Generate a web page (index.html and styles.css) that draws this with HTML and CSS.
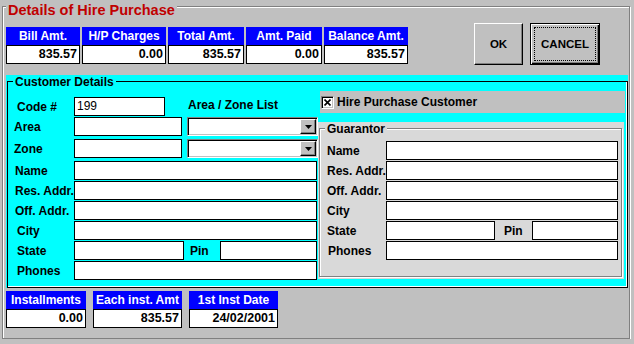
FILE: index.html
```html
<!DOCTYPE html>
<html lang="en">

<head>
    <meta charset="UTF-8">
    <title>Details of Hire Purchase</title>
    <link rel="stylesheet" href="styles.css">
</head>

<body>
    <div class="window">
        <span class="window-title">Details of Hire Purchase</span>

        <div class="top">
            <div class="amounts">
                <div class="amt w74"><div class="amt-head">Bill Amt.</div><div class="amt-val">835.57</div></div>
                <div class="amt w84"><div class="amt-head">H/P Charges</div><div class="amt-val">0.00</div></div>
                <div class="amt w76"><div class="amt-head">Total Amt.</div><div class="amt-val">835.57</div></div>
                <div class="amt w76"><div class="amt-head">Amt. Paid</div><div class="amt-val">0.00</div></div>
                <div class="amt w84"><div class="amt-head">Balance Amt.</div><div class="amt-val">835.57</div></div>
            </div>
            <button class="btn btn-ok">OK</button>
            <button class="btn btn-cancel"><span class="focus">CANCEL</span></button>
        </div>

        <div class="customer">
            <div class="cust-frame">
                <span class="group-title">Customer Details</span>

                <div class="cust-left">
                    <div class="row first">
                        <span class="lbl code">Code #</span>
                        <div class="field w91">199</div>
                        <span class="zone-list">Area / Zone List</span>
                    </div>
                    <div class="row">
                        <span class="lbl tight">Area</span>
                        <div class="field w108"></div>
                        <div class="combo"><span class="drop"><svg width="7" height="4" viewBox="0 0 7 4"><path d="M0 0h7L3.5 4z" fill="#000"/></svg></span></div>
                    </div>
                    <div class="row wide">
                        <span class="lbl tight">Zone</span>
                        <div class="field w108"></div>
                        <div class="combo"><span class="drop"><svg width="7" height="4" viewBox="0 0 7 4"><path d="M0 0h7L3.5 4z" fill="#000"/></svg></span></div>
                    </div>
                    <div class="row wide">
                        <span class="lbl">Name</span>
                        <div class="field w243"></div>
                    </div>
                    <div class="row">
                        <span class="lbl">Res. Addr.</span>
                        <div class="field w243"></div>
                    </div>
                    <div class="row">
                        <span class="lbl">Off. Addr.</span>
                        <div class="field w243"></div>
                    </div>
                    <div class="row">
                        <span class="lbl code">City</span>
                        <div class="field w243"></div>
                    </div>
                    <div class="row">
                        <span class="lbl code">State</span>
                        <div class="field w110"></div>
                        <span class="pin-lbl">Pin</span>
                        <div class="field w97"></div>
                    </div>
                    <div class="row">
                        <span class="lbl code">Phones</span>
                        <div class="field w243"></div>
                    </div>
                </div>

                <div class="cust-right">
                    <div class="hp-check">
                        <span class="check"><svg width="7" height="7" viewBox="0 0 7 7"><path d="M0.5 0.5l6 6M6.5 0.5l-6 6" stroke="#000" stroke-width="1.6"/></svg></span>
                        Hire Purchase Customer
                    </div>

                    <div class="guarantor">
                        <div class="g-frame">
                            <span class="g-title">Guarantor</span>
                            <div class="row first">
                                <span class="g-lbl">Name</span>
                                <div class="field w232"></div>
                            </div>
                            <div class="row">
                                <span class="g-lbl">Res. Addr.</span>
                                <div class="field w232"></div>
                            </div>
                            <div class="row">
                                <span class="g-lbl">Off. Addr.</span>
                                <div class="field w232"></div>
                            </div>
                            <div class="row">
                                <span class="g-lbl">City</span>
                                <div class="field w232"></div>
                            </div>
                            <div class="row">
                                <span class="g-lbl">State</span>
                                <div class="field w109"></div>
                                <span class="g-pin">Pin</span>
                                <div class="field w86"></div>
                            </div>
                            <div class="row">
                                <span class="g-lbl phones">Phones</span>
                                <div class="field w232"></div>
                            </div>
                        </div>
                    </div>
                </div>
            </div>
        </div>

        <div class="amounts bottom">
            <div class="amt w80"><div class="amt-head">Installments</div><div class="amt-val">0.00</div></div>
            <div class="amt w89"><div class="amt-head">Each inst. Amt</div><div class="amt-val">835.57</div></div>
            <div class="amt w89"><div class="amt-head">1st Inst Date</div><div class="amt-val">24/02/2001</div></div>
        </div>
    </div>
</body>

</html>
```

FILE: styles.css
```css
body {
    margin: 0;
    background-color: #c0c0c0;
    font-family: "Liberation Sans", Arial, sans-serif;
    font-size: 12px;
    font-weight: bold;
    color: #000;
}

/* outer group box */
.window {
    position: relative;
    box-sizing: border-box;
    width: 628px;
    height: 333px;
    margin: 6px 0 0 2px;
    padding: 16px 0 0 3px;
    border: 1px solid #808080;
    box-shadow: inset 1px 1px #fff, 1px 1px #fff;
}

.window-title {
    position: absolute;
    top: -5px;
    left: 3px;
    padding: 0 2px;
    background-color: #c0c0c0;
    color: #c00000;
    font-size: 14.5px;
    line-height: 17px;
}

.top {
    display: flex;
    height: 42px;
}

/* blue caption + white value boxes */
.amounts {
    display: flex;
    gap: 2px;
    margin-top: 4px;
}

.amounts.bottom {
    gap: 7px;
    margin-top: 3px;
}

.amt-head {
    height: 18px;
    line-height: 18px;
    background-color: #0000ff;
    color: #fff;
    text-align: center;
    white-space: nowrap;
}

.amt-val {
    box-sizing: border-box;
    height: 19px;
    line-height: 17px;
    padding-right: 2px;
    background-color: #fff;
    border: 1px solid #000;
    text-align: right;
    font-size: 12.5px;
}

.w74 { width: 74px; }
.w76 { width: 76px; }
.w80 { width: 80px; }
.w84 { width: 84px; }
.w86 { width: 86px; }
.w89 { width: 89px; }
.w91 { width: 91px; }
.w97 { width: 97px; }
.w108 { width: 108px; }
.w109 { width: 109px; }
.w110 { width: 110px; }
.w232 { width: 232px; }
.w243 { width: 243px; }

.btn {
    box-sizing: border-box;
    height: 42px;
    padding: 0;
    background-color: #c0c0c0;
    border: 1px solid;
    border-color: #fff #000 #000 #fff;
    box-shadow: inset -1px -1px #808080;
    font-family: "Liberation Sans", Arial, sans-serif;
    font-size: 11.5px;
    font-weight: bold;
    color: #000;
}

.btn-ok {
    width: 49px;
    margin-left: 66px;
}

.btn-cancel {
    width: 70px;
    margin-left: 7px;
    padding: 3px;
    border-color: #000;
    box-shadow: inset 1px 1px #fff, inset -1px -1px #000, inset -2px -2px #808080;
}

.focus {
    display: flex;
    align-items: center;
    justify-content: center;
    height: 100%;
    box-sizing: border-box;
    border: 1px dotted #000;
}

/* cyan customer panel */
.customer {
    box-sizing: border-box;
    width: 622px;
    height: 213px;
    margin-top: 10px;
    padding: 6px 0 0 1px;
    background-color: #00ffff;
}

.cust-frame {
    position: relative;
    display: flex;
    box-sizing: border-box;
    width: 621px;
    height: 207px;
    border: 1px solid #000;
    box-shadow: inset -1px -1px #fff;
}

.group-title {
    position: absolute;
    top: -7px;
    left: 5px;
    padding: 0 2px;
    background-color: #00ffff;
    line-height: 14px;
}

.cust-left {
    width: 310px;
    padding-top: 15px;
}

.row {
    display: flex;
    align-items: center;
    height: 19px;
    margin-top: 1px;
}

.row.first {
    margin-top: 0;
}

.row.wide {
    margin-top: 3px;
}

.lbl {
    box-sizing: border-box;
    width: 66px;
    padding-left: 7px;
}

.lbl.code {
    padding-left: 9px;
}

.lbl.tight {
    padding-left: 6px;
}

.field {
    box-sizing: border-box;
    height: 19px;
    padding-left: 2px;
    line-height: 17px;
    background-color: #fff;
    border: 1px solid #000;
    font-weight: normal;
}

.zone-list {
    margin-left: 23px;
    margin-top: -3px;
}

.combo {
    display: flex;
    justify-content: flex-end;
    box-sizing: border-box;
    width: 131px;
    height: 19px;
    margin-left: 5px;
    padding: 1px;
    background-color: #fff;
    border: 1px solid;
    border-color: #808080 #fff #fff #808080;
    box-shadow: inset 1px 1px #000, inset -1px -1px #c0c0c0;
}

.drop {
    display: flex;
    align-items: center;
    justify-content: center;
    box-sizing: border-box;
    width: 16px;
    height: 100%;
    background-color: #c0c0c0;
    border: 1px solid;
    border-color: #fff #000 #000 #fff;
    box-shadow: inset -1px -1px #808080;
}

.pin-lbl {
    box-sizing: border-box;
    width: 36px;
    padding-left: 6px;
}

.cust-right {
    width: 306px;
}

.hp-check {
    display: flex;
    align-items: center;
    width: 305px;
    height: 22px;
    margin: 9px 0 0 2px;
    padding-left: 1px;
    box-sizing: border-box;
    background-color: #c0c0c0;
}

.check {
    display: flex;
    align-items: center;
    justify-content: center;
    box-sizing: border-box;
    width: 13px;
    height: 13px;
    margin-right: 3px;
    background-color: #fff;
    border: 1px solid;
    border-color: #808080 #fff #fff #808080;
    box-shadow: inset 1px 1px #000, inset -1px -1px #c0c0c0;
}

/* guarantor group */
.guarantor {
    box-sizing: border-box;
    width: 306px;
    height: 157px;
    margin-top: 9px;
    padding: 6px 2px 2px 1px;
    background-color: #d9d9d9;
}

.g-frame {
    position: relative;
    box-sizing: border-box;
    height: 100%;
    padding: 12px 0 0 7px;
    border: 1px solid #808080;
    box-shadow: inset 1px 1px #fff, 1px 1px #fff;
}

.g-title {
    position: absolute;
    top: -7px;
    left: 5px;
    padding: 0 2px;
    background-color: #d9d9d9;
    line-height: 14px;
}

.g-lbl {
    width: 59px;
}

.g-lbl.phones {
    padding-left: 1px;
    box-sizing: border-box;
}

.g-pin {
    box-sizing: border-box;
    width: 37px;
    padding-left: 9px;
}
```
